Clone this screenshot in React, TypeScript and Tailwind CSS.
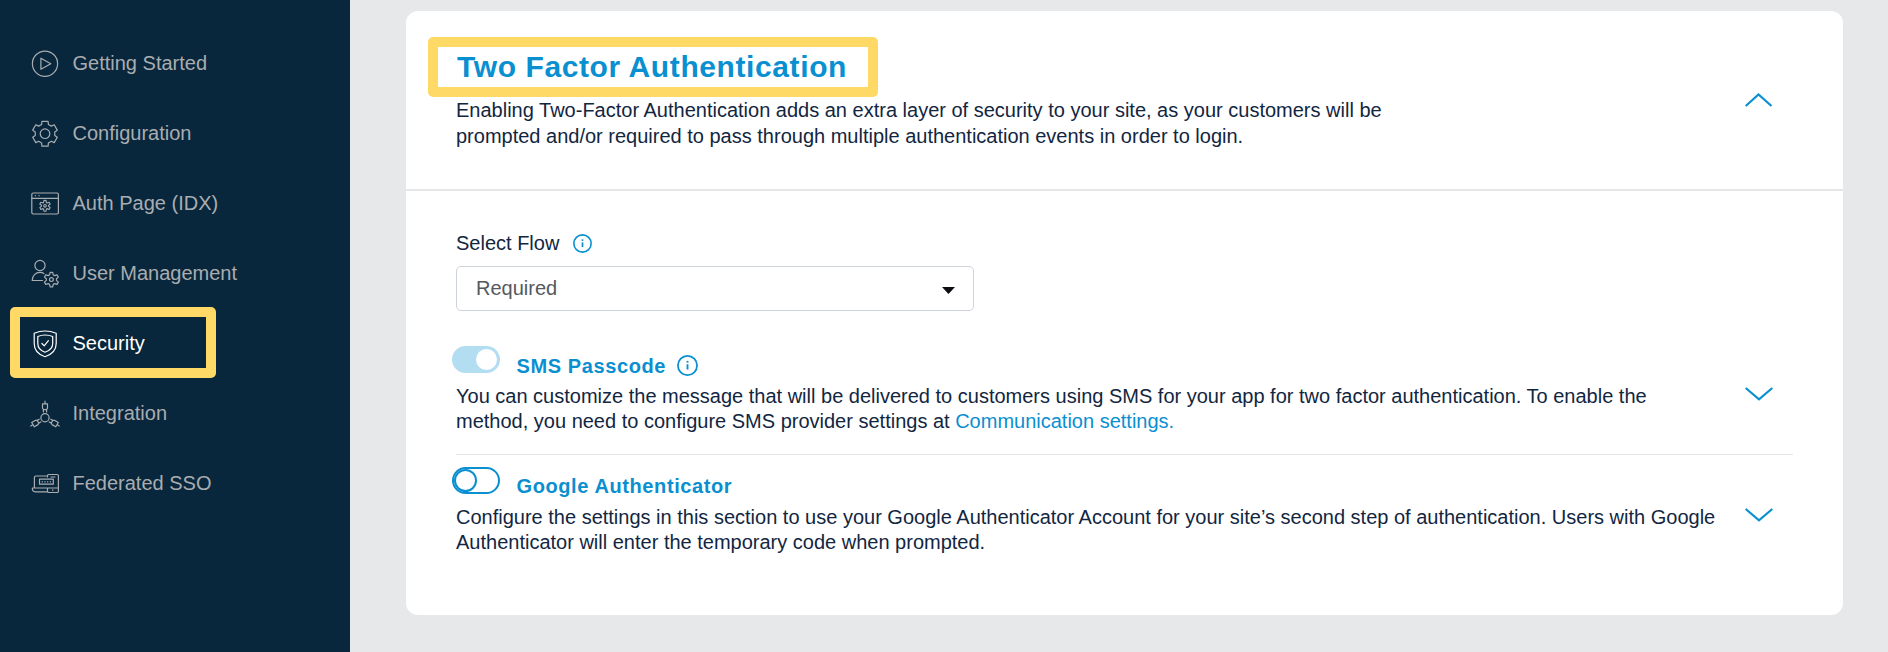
import type { ReactNode } from "react";

function gearPath(cx: number, cy: number, outer: number, inner: number, topHalf: number, rootHalf: number) {
  const point = (radius: number, deg: number) => {
    const a = ((deg - 90) * Math.PI) / 180;
    return `${(cx + radius * Math.cos(a)).toFixed(2)} ${(cy + radius * Math.sin(a)).toFixed(2)}`;
  };
  const parts: string[] = [];
  for (let k = 0; k < 6; k++) {
    const a = k * 60;
    parts.push(`${k === 0 ? "M" : "L"}${point(inner, a - rootHalf)}`);
    parts.push(`L${point(outer, a - topHalf)}`);
    parts.push(`L${point(outer, a + topHalf)}`);
    parts.push(`L${point(inner, a + rootHalf)}`);
  }
  return parts.join("") + "Z";
}

function NavIcon({ children }: { children: ReactNode }) {
  return (
    <svg
      className="size-[30px] shrink-0"
      viewBox="0 0 30 30"
      fill="none"
      stroke="currentColor"
      strokeWidth="1.2"
      strokeLinejoin="round"
      strokeLinecap="round"
    >
      {children}
    </svg>
  );
}

const items: { label: string; icon: ReactNode; active?: boolean }[] = [
  {
    label: "Getting Started",
    icon: (
      <>
        <circle cx="15" cy="14.7" r="12.6" />
        <path d="M10.9 9.2v11l9.9-5.5z" />
      </>
    ),
  },
  {
    label: "Configuration",
    icon: (
      <>
        <path d={gearPath(15, 14.7, 12.8, 9.9, 14, 20)} />
        <circle cx="15" cy="14.7" r="4.8" />
      </>
    ),
  },
  {
    label: "Auth Page (IDX)",
    icon: (
      <>
        <rect x="1.8" y="4" width="26.6" height="21" rx="1.4" />
        <path d="M1.8 9.4h26.6M5.4 6.7h.1M9 6.7h.1" />
        <path d={gearPath(15, 16.8, 5.5, 3.5, 11, 24)} strokeWidth="1.1" />
        <circle cx="15" cy="16.8" r="1.3" strokeWidth="1.1" />
      </>
    ),
  },
  {
    label: "User Management",
    icon: (
      <>
        <circle cx="10" cy="6.5" r="5.1" />
        <path d="M12.6 21.5H2.2c0-5 3.4-8.1 7.8-8.1 1.5 0 2.8.4 3.9 1.1" />
        <path d={gearPath(21.4, 20.6, 7.4, 5.1, 10, 21)} />
        <circle cx="21.4" cy="20.6" r="1.9" />
      </>
    ),
  },
  {
    label: "Security",
    active: true,
    icon: (
      <>
        <path d="M15 2c-3.4 0-7.3.8-10.8 2.2v10.3C4.2 21 8.6 25.6 15 27.7c6.4-2.1 11.2-6.7 11.2-13.2V4.2C22.7 2.8 18.4 2 15 2z" />
        <path d="M15 6c-2.4 0-4.9.5-7.2 1.5v7c0 4.3 2.8 7.2 7.2 8.7 4.4-1.5 7.7-4.4 7.7-8.7v-7C20.4 6.5 17.4 6 15 6z" />
        <path d="M11.9 14.5l2.3 2.4 4.2-5.2" />
      </>
    ),
  },
  {
    label: "Integration",
    icon: (
      <>
        <circle cx="15" cy="18.7" r="4.1" />
        {[0, 120, 240].map((deg) => (
          <path
            key={deg}
            transform={`rotate(${deg} 15 18.7)`}
            d="M15 2.2v2.3M12.5 4.8h5v4.4l-1 1.4h-3l-1-1.4zM13.4 10.6v2.3M16.6 10.6v2.3"
          />
        ))}
      </>
    ),
  },
  {
    label: "Federated SSO",
    icon: (
      <>
        <path d="M17 7H6a1.6 1.6 0 0 0-1.6 1.6V18.5M2.3 19h14.5M2.3 19c0 2.4 1 3.8 3 3.8h11.5" />
        <path d="M17.5 8V6.8a1.3 1.3 0 0 1 1.3-1.3h8.300a1.3 1.3 0 0 1 1.3 1.3v15.400a1.3 1.3 0 0 1-1.3 1.3h-8.300a1.3 1.3 0 0 1-1.3-1.3v-3.200h10.900M21 8h4" />
        <rect x="9.5" y="10.2" width="13.8" height="5" />
        <path d="M12.3 12.5v.4M15 12.5v.4M17.7 12.5v.4M20.4 12.5v.4M22.8 20.8v.7" />
      </>
    ),
  },
];

function InfoIcon({ className }: { className: string }) {
  return (
    <svg className={className} viewBox="0 0 20 20" fill="none" stroke="#0a8fd0">
      <circle cx="10" cy="10" r="9.1" strokeWidth="1.7" />
      <path d="M10 8.8v5" strokeWidth="1.8" />
      <path d="M10 5.6v1.7" strokeWidth="1.8" />
    </svg>
  );
}

function Chevron({ up = false }: { up?: boolean }) {
  return (
    <svg className="h-[14px] w-7 shrink-0" viewBox="0 0 28 14" fill="none" stroke="#0a8fd0" strokeWidth="2.2">
      <path d={up ? "M.7 13 13.5 1.5 26.5 13" : "M.7 1 14 12.3 27.3 1"} />
    </svg>
  );
}

export default function App() {
  return (
    <div className="flex h-[652px] w-[1888px] overflow-hidden bg-[#e7e8ea] font-['Liberation_Sans',Arial,sans-serif] text-xl text-[#12263f]">
      <nav className="relative w-[350px] shrink-0 bg-[#08263c] pt-[29px]">
        {items.map((item) => (
          <a
            key={item.label}
            className={
              item.active
                ? "flex h-[70px] items-center gap-[12.5px] pl-[30px] text-white"
                : "flex h-[70px] items-center gap-[12.5px] pl-[30px] text-[#a9adb0]"
            }
          >
            <NavIcon>{item.icon}</NavIcon>
            <span className="pb-0.5 leading-7">{item.label}</span>
          </a>
        ))}
        <div className="absolute left-[10px] top-[307px] h-[71px] w-[206px] rounded-[5px] border-[10px] border-[#ffd966]" />
      </nav>

      <main className="flex-1 pl-14 pt-[11px]">
        <section className="h-[604px] w-[1437px] rounded-[12px] bg-white">
          <header className="flex h-[180px] border-b-2 border-[#e6e6e7]">
            <div className="w-[1339px] pt-[26px]">
              <h1 className="ml-[22px] flex h-[60px] w-[450px] items-center whitespace-nowrap rounded-[5px] border-[10px] border-[#ffd966] pl-[19px] text-[30px] font-bold leading-10 tracking-[0.6px] text-[#0a8fd0]">
                Two Factor Authentication
              </h1>
              <p className="ml-[50px] whitespace-nowrap leading-[26px]">
                Enabling Two-Factor Authentication adds an extra layer of security to your site, as your customers will be
                <br />
                prompted and/or required to pass through multiple authentication events in order to login.
              </p>
            </div>
            <div className="pt-[82px]">
              <Chevron up />
            </div>
          </header>

          <div className="pl-[50px] pt-[38px]">
            <div className="flex h-7 items-center">
              <label>Select Flow</label>
              <InfoIcon className="ml-[14px] size-[19px]" />
            </div>
            <button className="mt-[9px] flex h-[45px] w-[518px] items-center justify-between rounded-[5px] border border-[#ced3d9] pl-[19px] pr-[18px] text-[#55595e]">
              <span className="pb-px">Required</span>
              <svg className="mt-[3px] h-[7px] w-[13px]" viewBox="0 0 13 7">
                <path d="M0 0h13L6.5 7z" fill="#0b0d10" />
              </svg>
            </button>

            <div className="mt-[35px] flex h-[109px] w-[1337px] border-b border-[#e6e6e6]">
              <div className="w-[1289px]">
                <div className="flex">
                  <span className="-ml-1 flex h-[27px] w-12 items-center justify-end rounded-full bg-[#b3ddf1] pr-[3px]">
                    <span className="size-[21px] rounded-full bg-white" />
                  </span>
                  <h2 className="ml-[16.5px] mt-[6px] font-bold leading-7 tracking-[0.6px] text-[#0a8fd0]">SMS Passcode</h2>
                  <InfoIcon className="ml-[10.5px] mt-[9px] size-[21px]" />
                </div>
                <p className="mt-1 whitespace-nowrap leading-[25px]">
                  You can customize the message that will be delivered to customers using SMS for your app for two factor authentication. To enable the
                  <br />
                  method, you need to configure SMS provider settings at <a className="text-[#0a8fd0]">Communication settings.</a>
                </p>
              </div>
              <div className="pt-[41px]">
                <Chevron />
              </div>
            </div>

            <div className="mt-3 flex w-[1337px]">
              <div className="w-[1289px]">
                <div className="flex">
                  <span className="-ml-1 flex h-[27px] w-12 items-center rounded-full border-2 border-[#0a8fd0]">
                    <span className="size-[23px] rounded-full border-2 border-[#0a8fd0]" />
                  </span>
                  <h2 className="ml-[16.5px] mt-[5px] font-bold leading-7 tracking-[0.6px] text-[#0a8fd0]">Google Authenticator</h2>
                </div>
                <p className="mt-[5px] whitespace-nowrap leading-[25px]">
                  Configure the settings in this section to use your Google Authenticator Account for your site’s second step of authentication. Users with Google
                  <br />
                  Authenticator will enter the temporary code when prompted.
                </p>
              </div>
              <div className="pt-[41px]">
                <Chevron />
              </div>
            </div>
          </div>
        </section>
      </main>
    </div>
  );
}
